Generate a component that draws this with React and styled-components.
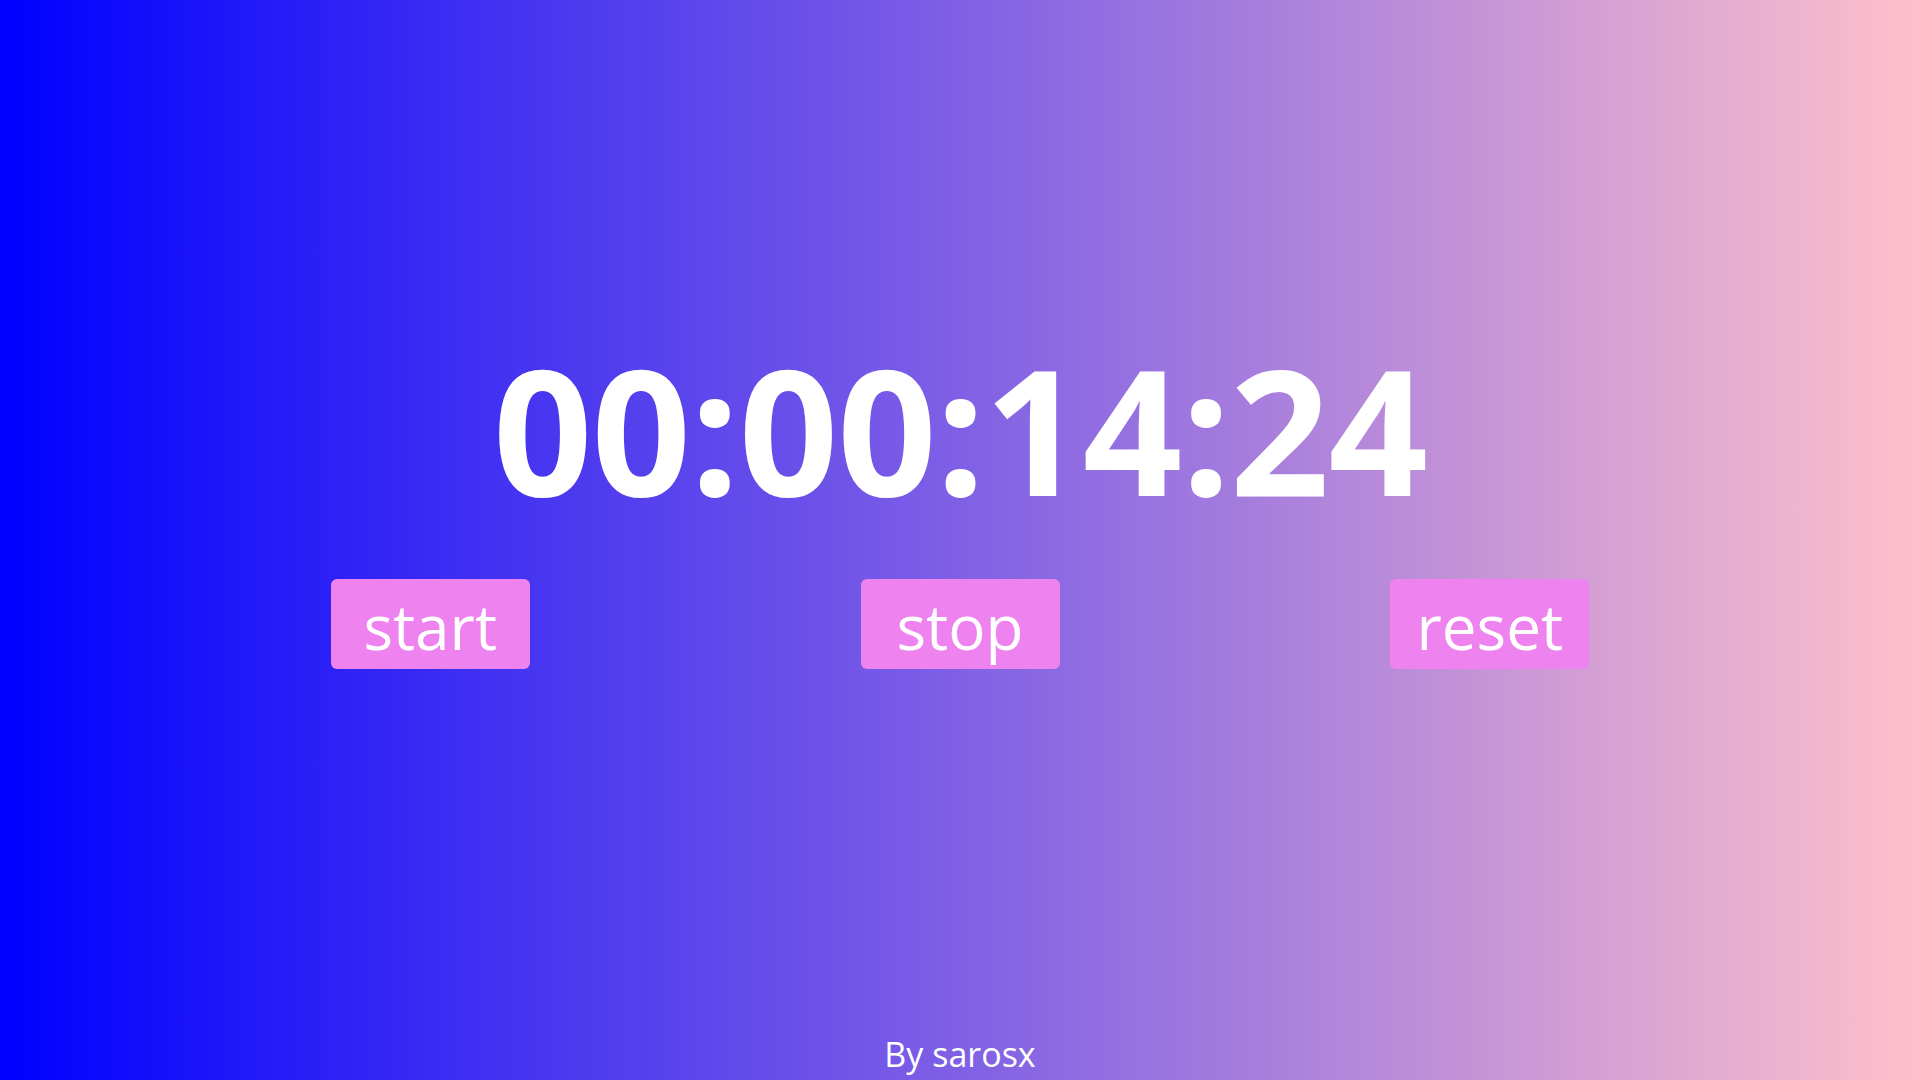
import React from 'react';
import styled, { createGlobalStyle } from 'styled-components';

const GlobalStyle = createGlobalStyle`
  html, body {
    margin: 0;
    padding: 0;
  }
  body {
    font-family: 'Open Sans', 'Noto Sans', sans-serif;
  }
`;

const StyledWrapper = styled.div`
  display: flex;
  flex-direction: column;
  align-items: stretch;
  min-height: 100vh;
  box-sizing: border-box;
  padding-top: 342px;
  padding-bottom: 9px;
  background: linear-gradient(to right, blue, pink);
  color: white;
`;

const Timer = styled.div`
  font-size: 174px;
  font-weight: 700;
  line-height: 1;
  text-align: center;
  letter-spacing: -1px;
`;

const Controls = styled.div`
  display: flex;
  justify-content: space-evenly;
  margin-top: 63px;
`;

const Button = styled.button`
  display: flex;
  align-items: center;
  justify-content: center;
  width: 199px;
  height: 90px;
  padding: 4px 0 0;
  box-sizing: border-box;
  border: none;
  border-radius: 6px;
  background-color: violet;
  color: white;
  font-family: 'Open Sans', 'Noto Sans', sans-serif;
  font-size: 62px;
  line-height: 1;
  cursor: pointer;
`;

const Footer = styled.footer`
  margin-top: auto;
  font-size: 34px;
  line-height: 1;
  text-align: center;
`;

const format = (n) => String(n).padStart(2, '0');

const App = () => {
  const time = [0, 0, 14, 24];

  return (
    <>
      <GlobalStyle />
      <StyledWrapper>
        <Timer>{time.map(format).join(':')}</Timer>
        <Controls>
          <Button type="button">start</Button>
          <Button type="button">stop</Button>
          <Button type="button">reset</Button>
        </Controls>
        <Footer>By sarosx</Footer>
      </StyledWrapper>
    </>
  );
};

export default App;
